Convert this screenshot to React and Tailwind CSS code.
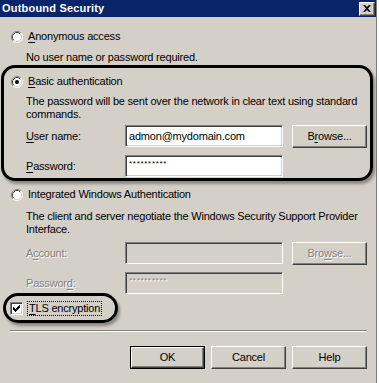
import React from "react";

function Radio({ checked }) {
  return (
    <svg width="12" height="12" viewBox="0 0 12 12" className="shrink-0 block">
      <circle cx="6" cy="6" r="5" fill="#fff" />
      <path d="M2.11 9.89 A5.5 5.5 0 0 1 9.89 2.11" stroke="#808080" strokeWidth="1" fill="none" />
      <path d="M2.82 9.18 A4.5 4.5 0 0 1 9.18 2.82" stroke="#404040" strokeWidth="1" fill="none" />
      <path d="M9.89 2.11 A5.5 5.5 0 0 1 2.11 9.89" stroke="#ffffff" strokeWidth="1" fill="none" />
      <path d="M9.18 2.82 A4.5 4.5 0 0 1 2.82 9.18" stroke="#d4d0c8" strokeWidth="1" fill="none" />
      {checked && <circle cx="6" cy="6" r="2" fill="#000" />}
    </svg>
  );
}

function Checkbox() {
  return (
    <div className="w-[13px] h-[13px] shrink-0 bg-white border border-t-[#808080] border-l-[#808080] border-r-white border-b-white shadow-[inset_1px_1px_0_#404040,inset_-1px_-1px_0_#d4d0c8] flex items-center justify-center">
      <svg width="7" height="7" viewBox="0 0 7 7" className="block">
        <path d="M0 2h1v1h1v1h1V3h1V2h1V1h1V0h1v3H6v1H5v1H4v1H3v1H2V6H1V5H0z" fill="#000" />
      </svg>
    </div>
  );
}

function Button({ children, isDefault, disabled }) {
  const inner = (
    <div
      className={
        "h-full w-full bg-[#d4d0c8] border border-t-white border-l-white border-r-[#404040] border-b-[#404040] shadow-[inset_-1px_-1px_0_#808080] flex items-center justify-center " +
        (disabled ? "text-[#808080] [text-shadow:1px_1px_0_#fff]" : "text-black")
      }
    >
      {children}
    </div>
  );
  if (isDefault) {
    return <div className="w-[75px] h-[23px] border border-black shrink-0">{inner}</div>;
  }
  return <div className="w-[75px] h-[23px] shrink-0">{inner}</div>;
}

function Input({ value, disabled, w = "w-[158px]" }) {
  return (
    <div
      className={
        w +
        " h-[22px] shrink-0 border border-t-[#808080] border-l-[#808080] border-r-white border-b-white shadow-[inset_1px_1px_0_#404040,inset_-1px_-1px_0_#d4d0c8] flex items-center pl-[3px] " +
        (disabled ? "bg-[#d4d0c8]" : "bg-white")
      }
    >
      {value}
    </div>
  );
}

function Stars({ disabled }) {
  return (
    <span className={"text-[8px] leading-[8px] tracking-[0.7px] -mt-[4px] " + (disabled ? "text-[#808080] [text-shadow:1px_1px_0_#fff]" : "text-black")}>
      **********
    </span>
  );
}

const U = ({ children }) => <span className="underline underline-offset-[2px]">{children}</span>;

export default function App() {
  return (
    <div className="relative w-[379px] h-[383px] overflow-hidden bg-[#d4d0c8] text-black text-[11px] leading-[13px] font-['Liberation_Sans',Arial,sans-serif] flex">
      <div className="w-[376px] h-full flex flex-col">
        {/* Title bar */}
        <div className="h-[17px] bg-[#0a246a] flex items-center justify-between pl-[2px] pr-[1px]">
          <span className="text-white font-bold text-[11px] leading-[13px] tracking-[0.2px]">Outbound Security</span>
          <div className="w-[16px] h-[14px] bg-[#d4d0c8] border border-t-white border-l-white border-r-[#404040] border-b-[#404040] shadow-[inset_-1px_-1px_0_#808080] flex items-center justify-center">
            <svg width="8" height="7" viewBox="0 0 8 7" className="block">
              <path d="M0 0h2l2 2 2-2h2L5 3.5 8 7H6L4 5 2 7H0l3-3.5z" fill="#000" />
            </svg>
          </div>
        </div>

        {/* Body */}
        <div className="flex flex-col tracking-[-0.2px]">
          <div className="mt-[13px] h-[13px] flex items-center pl-[11px]">
            <Radio />
            <span className="ml-[5px]"><U>A</U>nonymous access</span>
          </div>
          <div className="mt-[8px] h-[13px] pl-[26px]">No user name or password required.</div>

          <div className="mt-[11px] h-[13px] flex items-center pl-[11px]">
            <Radio checked />
            <span className="ml-[5px]"><U>B</U>asic authentication</span>
          </div>
          <div className="mt-[7px] pl-[26px]">
            The password will be sent over the network in clear text using standard
            <br />
            commands.
          </div>
          <div className="mt-[4px] h-[22px] flex items-center pl-[26px]">
            <span className="w-[99px]"><U>U</U>ser name:</span>
            <Input value="admon@mydomain.com" />
            <div className="ml-[9px]"><Button>B<U>r</U>owse...</Button></div>
          </div>
          <div className="mt-[8px] h-[22px] flex items-center pl-[26px]">
            <span className="w-[99px]"><U>P</U>assword:</span>
            <Input value={<Stars />} />
          </div>

          <div className="mt-[11px] h-[13px] flex items-center pl-[11px]">
            <Radio />
            <span className="ml-[5px]">Integrated Windows Authentication</span>
          </div>
          <div className="mt-[9px] pl-[26px]">
            The client and server negotiate the Windows Security Support Provider
            <br />
            Interface.
          </div>
          <div className="mt-[6px] h-[22px] flex items-center pl-[26px]">
            <span className="w-[99px] text-[#808080] [text-shadow:1px_1px_0_#fff]">A<U>c</U>count:</span>
            <Input disabled value="" />
            <div className="ml-[9px]"><Button disabled>Bro<U>w</U>se...</Button></div>
          </div>
          <div className="mt-[8px] h-[22px] flex items-center pl-[26px]">
            <span className="w-[99px] text-[#808080] [text-shadow:1px_1px_0_#fff]">Passwor<U>d</U>:</span>
            <Input disabled value={<Stars disabled />} />
          </div>

          <div className="mt-[8px] h-[13px] flex items-center pl-[10px]">
            <Checkbox />
            <span className="ml-[4px] h-[15px] px-[1px] border border-dotted border-black flex items-center"><U>T</U>LS encryption</span>
          </div>

          <div className="mt-[15px] ml-[10px] mr-[9px] h-[2px] border-t border-t-[#808080] border-b border-b-white" />

          <div className="mt-[14px] flex justify-end gap-[6px] pr-[9px]">
            <Button isDefault>OK</Button>
            <Button>Cancel</Button>
            <Button>Help</Button>
          </div>
        </div>
      </div>
      <div className="w-[1px] h-full bg-[#808080]" />
      <div className="w-[2px] h-full bg-white" />

      {/* Annotation outlines */}
      <div className="absolute left-[1px] top-[65px] w-[372px] h-[116px] rounded-[14px] border-[3px] border-black shadow-[2px_3px_3px_rgba(0,0,0,0.35)] pointer-events-none" />
      <div className="absolute left-[3px] top-[293px] w-[115px] h-[30px] rounded-full border-[3px] border-black shadow-[2px_3px_3px_rgba(0,0,0,0.35)] pointer-events-none" />
    </div>
  );
}
